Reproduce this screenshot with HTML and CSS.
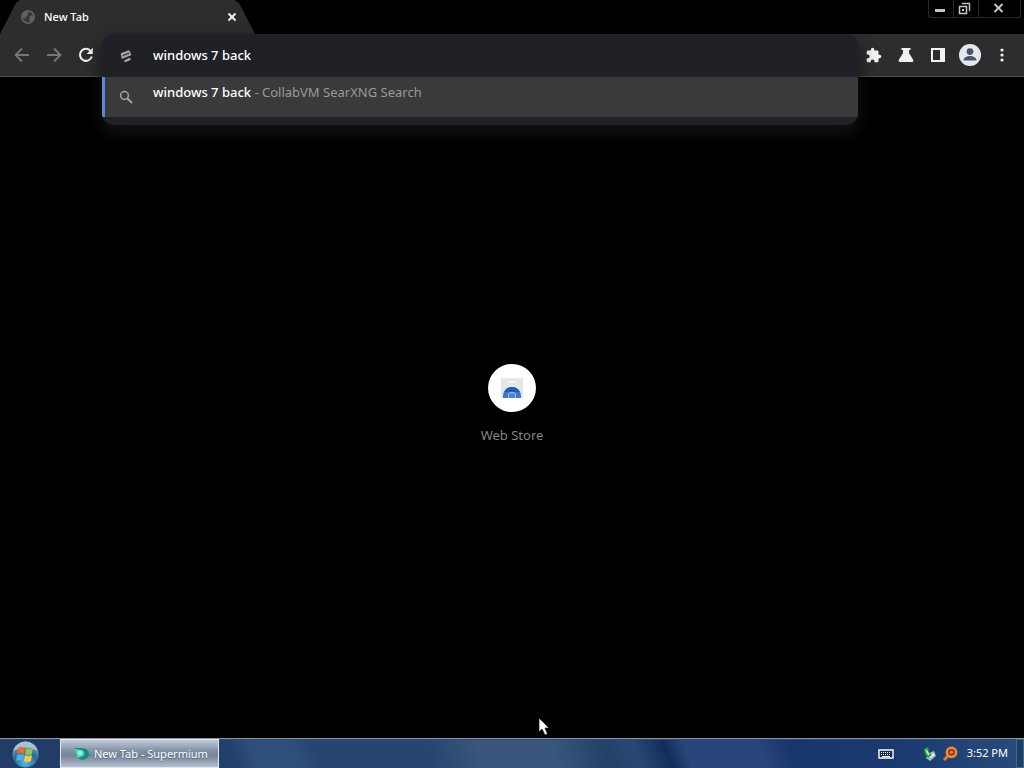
FILE: index.html
```html
<!DOCTYPE html>
<html lang="en">
<head>
<meta charset="utf-8">
<title>New Tab</title>
<link rel="stylesheet" href="styles.css">
</head>
<body>
<div class="desktop">
  <header class="tabstrip">
    <div class="tab">
      <div class="tab-inner">
        <svg class="tab-icon" viewBox="0 0 16 16" aria-hidden="true"><circle cx="8" cy="8" r="6.2" fill="#353535" stroke="#626262" stroke-width="1.6"/><path d="M2 6 4 3 8 2 9 4 7 5 8 7 5 8 6 10 3 9zM9 8l3-2 2 1-1 4-3 2-1-2 1-1z" fill="#626262"/></svg>
        <span class="tab-title">New Tab</span>
        <button class="tab-close" aria-label="Close tab"><svg width="10" height="10" viewBox="0 0 10 10"><path d="M1.5 1.5l7 7M8.500 1.500l-7 7" stroke="#f2f2f2" stroke-width="2"/></svg></button>
      </div>
    </div>
    <div class="window-controls">
      <button class="win min" aria-label="Minimize"><svg width="24" height="17" viewBox="0 0 24 17"><path d="M6 10.500h10" stroke="#c4c4c4" stroke-width="3"/></svg></button>
      <button class="win restore" aria-label="Restore"><svg width="24" height="17" viewBox="0 0 24 17"><path d="M8.500 4V3.500h7v7H15M5.500 6.500h7v7h-7z" fill="none" stroke="#c4c4c4" stroke-width="1.500"/><path d="M8 9h2v2H8z" fill="#c4c4c4"/></svg></button>
      <button class="win close" aria-label="Close"><svg width="41" height="17" viewBox="0 0 41 17"><path d="M15.500 4l8 8M23.500 4l-8 8" stroke="#c4c4c4" stroke-width="2"/></svg></button>
    </div>
  </header>
  <nav class="toolbar">
    <div class="nav-buttons">
      <button class="tool" aria-label="Back"><svg width="20" height="20" viewBox="0 0 20 20" fill="none" stroke="#777" stroke-width="1.800"><path d="M17 10H4M10 3.500 3.500 10l6.500 6.500"/></svg></button>
      <button class="tool" aria-label="Forward"><svg width="20" height="20" viewBox="0 0 20 20" fill="none" stroke="#777" stroke-width="1.800"><path d="M3 10h13M10 3.500l6.500 6.500-6.500 6.500"/></svg></button>
      <button class="tool" aria-label="Reload"><svg width="20" height="20" viewBox="0 0 20 20"><path d="M14.800 6.200A6 6 0 1 0 15.800 11.500" fill="none" stroke="#f1f1f1" stroke-width="2"/><path d="M16.800 2.800V9h-6.200z" fill="#f1f1f1"/></svg></button>
    </div>
    <div class="omnibox">
      <div class="omnibox-panel">
        <div class="address-row">
          <svg class="row-icon" viewBox="0 0 16 16" aria-hidden="true"><path d="M4 6.200 10.500 3.500M4.500 9.500 12 6.500M7.500 13l4-1.800" stroke="#a6a6a6" stroke-width="2.400" stroke-linecap="round"/><path d="M3.500 6.500l1 3M11.500 3.500l.500 3" stroke="#999" stroke-width="1.500"/></svg>
          <input class="address" type="text" value="windows 7 back" aria-label="Address and search bar">
        </div>
        <a class="suggestion" href="#search">
          <svg class="row-icon" viewBox="0 0 16 16" aria-hidden="true"><circle cx="6.500" cy="6.500" r="3.900" fill="none" stroke="#a6a6a6" stroke-width="1.500"/><path d="M9.500 9.500l4.500 4.500" stroke="#a6a6a6" stroke-width="1.800"/></svg>
          <span class="suggestion-text"><span class="query">windows 7 back</span> - CollabVM SearXNG Search</span>
        </a>
      </div>
    </div>
    <div class="actions">
      <button class="tool" aria-label="Extensions"><svg width="16" height="16" viewBox="1 0 23 23"><path fill="#f1f1f1" d="M20.500 11H19V7a2 2 0 0 0-2-2h-4V3.500a2.500 2.500 0 0 0-5 0V5H4a2 2 0 0 0-2 2v3.800h1.500a2.700 2.700 0 0 1 0 5.400H2V20a2 2 0 0 0 2 2h3.800v-1.500a2.700 2.700 0 0 1 5.400 0V22H17a2 2 0 0 0 2-2v-4h1.500a2.500 2.500 0 0 0 0-5z"/></svg></button>
      <button class="tool" aria-label="Experiments"><svg width="20" height="20" viewBox="0 0 20 20"><path fill="#f1f1f1" d="M5.500 3h9v2H13v3l4 6.500q1 2.500-1 2.500H4q-2 0-1-2.500L7 8V5H5.500z"/></svg></button>
      <button class="tool" aria-label="Side panel"><svg width="20" height="20" viewBox="0 0 20 20"><path fill="#f1f1f1" fill-rule="evenodd" d="M3 3h14v14H3zm2 2v10h7V5z"/></svg></button>
      <button class="tool avatar" aria-label="Profile"><svg width="24" height="24" viewBox="0 0 24 24"><circle cx="12" cy="12" r="11" fill="#e4e8ef"/><circle cx="12" cy="8.600" r="3.400" fill="#4c5568"/><path d="M5.500 17.500c0-6 13-6 13 0z" fill="#4c5568"/></svg></button>
      <button class="tool" aria-label="Menu"><svg width="20" height="20" viewBox="0 0 20 20" fill="#f1f1f1"><circle cx="10" cy="5" r="1.600"/><circle cx="10" cy="10" r="1.600"/><circle cx="10" cy="15" r="1.600"/></svg></button>
    </div>
  </nav>
  <main class="page">
    <a class="shortcut" href="#store">
      <span class="shortcut-icon"><svg width="24" height="24" viewBox="0 0 24 24" aria-hidden="true"><path fill="#e7e7e7" d="M1 2h22v20H1z"/><path fill="#f4f4f4" d="M8 5h8v2H8z"/><path fill="#3e74cf" d="M3 22v-2a9 9 0 0 1 18 0v2z"/><path fill="#275bb0" d="M4 16a9 9 0 0 1 16 0z"/><path fill="#a9c5f3" d="M8 22v-2a4 4 0 0 1 8 0v2h-1v-2a3 3 0 0 0-6 0v2z"/><path fill="#4b83e0" d="M9 22v-2a3 3 0 0 1 6 0v2z"/></svg></span>
      <span>Web Store</span>
    </a>
  </main>
  <footer class="taskbar">
    <button class="start" aria-label="Start"><svg width="30" height="28" viewBox="0 0 30 28"><defs><radialGradient id="orb" cx=".5" cy=".8" r=".75"><stop offset="0" stop-color="#55bde3"/><stop offset=".55" stop-color="#276c9c"/><stop offset="1" stop-color="#7ba0b8"/></radialGradient></defs><circle cx="15.500" cy="14.500" r="13" fill="url(#orb)"/><path d="M3 11a13 13 0 0 1 25 0q-12.500-7-25 0z" fill="#b9ced8" opacity=".8"/><path d="M8 8q3-2 7 0l-1 6q-3-2-7 0z" fill="#ed6a30"/><path d="M16 8q4 2 7 0l-1 6q-3 2-7 0z" fill="#91c951"/><path d="M7 15q3-2 7 0l-1 6q-3-2-7 0z" fill="#51aceb"/><path d="M15 15q4 2 7 0l-1 6q-4 2-7 0z" fill="#fac83c"/></svg></button>
    <button class="task"><svg width="16" height="16" viewBox="0 0 16 16" aria-hidden="true"><path d="M1 2h7q7 1 7 6t-7 6L2 11z" fill="#108b82"/><path d="M1 3l7 1q4 2 1 6L3 12z" fill="#55dfb4"/><circle cx="6" cy="7" r="2" fill="#a4f4d2"/></svg><span>New Tab - Supermium</span></button>
    <div class="tray">
      <svg class="keyboard" width="16" height="10" viewBox="0 0 16 10" aria-label="Keyboard"><path d="M1 1h14v8H1z" fill="#16284e" stroke="#fff" stroke-width="1.400"/><path d="M3 3.500h10M3 5.500h10" stroke="#fff" stroke-dasharray="1 1"/><path d="M4 7.500h8" stroke="#fff"/></svg>
      <div class="tray-icons">
        <svg width="16" height="16" viewBox="0 0 16 16" aria-label="Safely remove hardware"><path d="M7 7l5-2 2 5-6 5-4-3z" fill="#aebcbd"/><path d="M8 11l4-3" stroke="#fff" stroke-width="2"/><path d="M2 3l4-2 1 5 3 3-4 3-3-4z" fill="#24a83b"/><path d="M4 4l3 5" stroke="#c7eec7" stroke-width="1.500"/></svg>
        <svg width="16" height="16" viewBox="0 0 16 16" aria-label="Search tool"><circle cx="9.500" cy="6.300" r="4.600" fill="#65372f" stroke="#f68a2d" stroke-width="2.600"/><circle cx="9.500" cy="6.300" r="1.800" fill="#f47b26"/><path d="M6 10l-4 4" stroke="#ed7625" stroke-width="3"/></svg>
      </div>
      <time class="clock">3:52 PM</time>
      <button class="show-desktop" aria-label="Show desktop"></button>
    </div>
  </footer>
</div>
<svg class="cursor" width="12" height="19" viewBox="0 0 12 19" aria-hidden="true"><path d="M1 1v14l3-3 3 6 2.500-1L7 11h4z" fill="#fff" stroke="#111" stroke-width=".7"/></svg>
</body>
</html>
```
FILE: styles.css
```css
* { box-sizing: border-box; }
body {
  margin: 0;
  background: #000;
  color: #fff;
  font-family: "Noto Sans", "Open Sans", sans-serif;
  font-size: 13px;
}
button {
  padding: 0;
  border: 0;
  background: none;
  color: inherit;
  font: inherit;
}
a { color: inherit; text-decoration: none; }
svg { display: block; flex: none; }
.desktop {
  min-height: 100vh;
  display: flex;
  flex-direction: column;
}

.tabstrip {
  display: flex;
  justify-content: space-between;
  align-items: flex-start;
  height: 34px;
}
.tab {
  width: 255px;
  height: 34px;
  background: #2d2d2d;
  clip-path: polygon(0 100%, 16px 3px, 20px 0, 234px 0, 239px 3px, 100% 100%);
}
.tab-inner {
  display: flex;
  align-items: center;
  gap: 8px;
  height: 34px;
  padding: 0 18px 0 20px;
}
.tab-icon { width: 16px; height: 16px; }
.tab-title {
  flex: 1;
  padding-bottom: 2px;
  font-size: 11px;
  font-weight: 500;
}

.window-controls {
  display: flex;
  height: 18px;
  margin-right: 3px;
  border: 1px solid #292929;
  border-top: 0;
  border-radius: 0 0 3px 3px;
}
.win + .win { border-left: 1px solid #292929; }

.toolbar {
  display: flex;
  align-items: center;
  height: 43px;
  background: #2d2d2d;
  border-bottom: 1px solid #515151;
}
.nav-buttons, .actions { display: flex; align-items: center; }
.nav-buttons { padding-left: 6px; }
.actions { padding-right: 6px; }
.tool {
  display: flex;
  justify-content: center;
  align-items: center;
  width: 32px;
  height: 32px;
}
.omnibox {
  position: relative;
  flex: 1;
  align-self: stretch;
}
.omnibox-panel {
  position: absolute;
  top: 0;
  left: 0;
  right: 0;
  z-index: 2;
  padding-bottom: 8px;
  overflow: hidden;
  border-radius: 12px;
  background: #202127;
  box-shadow: 0 8px 16px #141414;
}
.address-row, .suggestion {
  display: flex;
  align-items: center;
  gap: 19px;
  padding-right: 16px;
}
.address-row { height: 43px; padding-left: 16px; }
.row-icon { width: 16px; height: 16px; }
.address {
  flex: 1;
  min-width: 0;
  padding: 0 0 2px;
  border: 0;
  outline: 0;
  background: transparent;
  color: #fff;
  font: 500 13px/20px "Noto Sans", sans-serif;
}
.suggestion {
  height: 40px;
  padding-left: 13px;
  border-left: 3px solid #5f86dc;
  background: #3a3a3a;
  color: #999;
}
.suggestion-text { line-height: 20px; padding-bottom: 10px; }
.query { color: #fff; font-weight: 500; }

.page {
  flex: 1;
  display: flex;
  justify-content: center;
  align-items: center;
  padding-bottom: 8px;
}
.shortcut {
  display: flex;
  flex-direction: column;
  align-items: center;
  gap: 14px;
  color: #858585;
  line-height: 18px;
}
.shortcut-icon {
  display: flex;
  align-items: center;
  justify-content: center;
  width: 48px;
  height: 48px;
  border-radius: 50%;
  background: #fff;
}

.taskbar {
  display: flex;
  align-items: stretch;
  height: 30px;
  border-top: 1px solid #8495a6;
  background: linear-gradient(70deg, #213c66 0%, #22406b 23%, #2f4f7b 25%, #2f4f7b 29%, #26456f 31%, #26456f 42%, #3a567e 47%, #3a567e 54%, #234267 59%, #294774 62%, #122d5c 65%, #29467a 67%, #29467a 74%, #17366a 77%, #1b3b70 88%, #284c7c 100%);
  box-shadow: inset 0 1px #284b6c;
}
.start { width: 50px; display: flex; justify-content: center; align-items: center; }
.task {
  display: flex;
  align-items: center;
  gap: 4px;
  margin-left: 10px;
  padding: 0 10px 0 13px;
  border: 1px solid #e5eaf0;
  background: linear-gradient(#c1cbd8 0%, #8490a3 40%, #76839a 58%, #b4bfcd 100%);
  color: #fff;
  font-size: 11px;
  text-shadow: 0 1px 1px #53657b;
}
.tray {
  display: flex;
  align-items: center;
  margin-left: auto;
}
.keyboard { margin-right: 28px; }
.tray-icons { display: flex; gap: 4px; margin-right: 9px; }
.clock {
  margin-right: 8px;
  padding-bottom: 2px;
  font-size: 11px;
}
.show-desktop {
  align-self: stretch;
  width: 8px;
  border: 1px solid #41688f;
  background: #203e62;
}
.cursor { position: absolute; left: 538px; top: 717px; z-index: 3; }
```
